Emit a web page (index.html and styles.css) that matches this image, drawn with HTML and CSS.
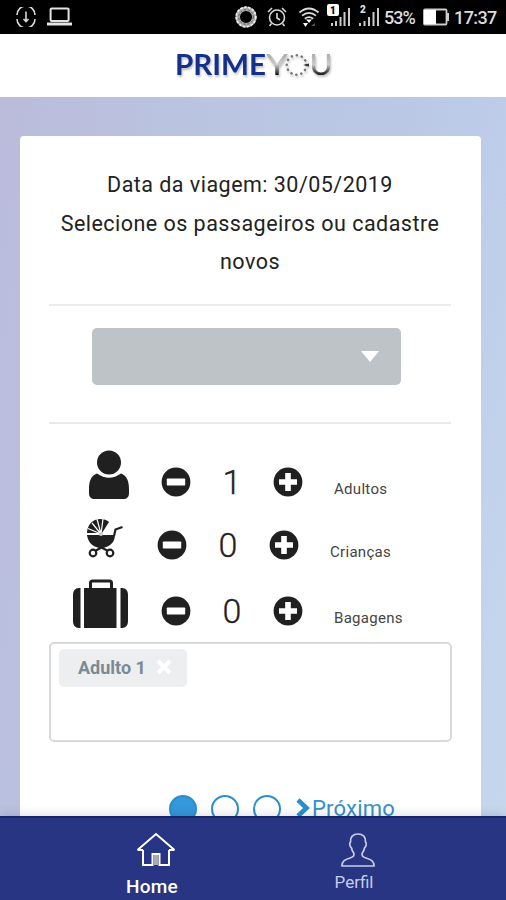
FILE: index.html
```html
<!DOCTYPE html>
<html lang="pt-BR">
<head>
<meta charset="utf-8">
<title>PrimeYou</title>
<link rel="stylesheet" href="styles.css">
</head>
<body>
<svg class="defs" width="0" height="0" aria-hidden="true">
  <symbol id="minus" viewBox="0 0 30 30"><circle cx="15" cy="15" r="14.4"/><rect x="5.8" y="11.6" width="18.4" height="6.8" rx=".7" fill="#fff"/></symbol>
  <symbol id="plus" viewBox="0 0 30 30"><circle cx="15" cy="15" r="14.4"/><path d="M12.200 6h5.600v6.200H24v5.600h-6.200V24h-5.600v-6.200H6v-5.600h6.200z" fill="#fff"/></symbol>
</svg>
<div class="screen">
  <div class="status">
    <svg class="st-sync" viewBox="0 0 20 20" width="20" height="20" fill="none" stroke="#d8d8d8" stroke-width="1.6"><path d="M1 8A9 9 0 0 1 19 8M1 12A9 9 0 0 0 19 12M10 4.500v10M7.500 12l2.500 2.500 2.500-2.500"/></svg>
    <svg class="st-laptop" viewBox="0 0 25 20" width="25" height="20"><rect x="3.6" y="1.500" width="18" height="12.500" rx="1" fill="none" stroke="#e4e4e4" stroke-width="2"/><path d="M0 15.500h25v3H0z" fill="#e4e4e4"/></svg>
    <span class="spacer"></span>
    <svg class="st-ring" viewBox="0 0 24 24" width="24" height="24" fill="none"><circle cx="12" cy="12" r="8.300" stroke="#aaa" stroke-width="4.500"/><circle cx="12" cy="12" r="9.800" stroke="#eee" stroke-width="1.8" stroke-dasharray="2.500 1.500"/><circle cx="12" cy="12" r="7.300" stroke="#555" stroke-width="1" stroke-dasharray="2 2"/></svg>
    <svg class="st-alarm" viewBox="0 0 20 20" width="20" height="20" fill="none" stroke="#d8d8d8" stroke-width="1.6"><circle cx="10" cy="10.5" r="7.5"/><path d="M10 6v5l3 2M1 5l4-4M19 5l-4-4M4.5 16.5L2.5 19M15.500 16.500l2 2.500"/></svg>
    <svg class="st-wifi" viewBox="0 0 22 22" width="22" height="22" fill="none" stroke="#ddd" stroke-width="1.7"><path d="M1.500 6.500q9.500-8 19 0M4 9.700q7-5.500 14 0M6.800 12.700q4.200-3 8.400 0"/><path d="M8 13.500h6l-3 3.500zM5 17h5l-2.500 4z" fill="#fff" stroke="none"/><path d="M13 20l4-3v3z" fill="#555" stroke="none"/></svg>
    <svg class="st-sim1" viewBox="0 0 24 24" width="24" height="24"><path d="M4 19h2v3H4zM8 17h2v5H8zM12.500 13h2v9h-2zM16.500 8h2v14h-2zM21 4h2v18h-2z" fill="#ccc"/><rect width="12" height="12" rx="2" fill="#fff"/><text x="6" y="9.500" text-anchor="middle" class="sim">1</text></svg>
    <svg class="st-sim2" viewBox="0 0 21 24" width="21" height="24"><path d="M0 19h2v3H0zM4.500 17h2v5h-2zM9 13h2v9H9zM13.500 8h2v14h-2zM18 4h2v18h-2z" fill="#ccc"/><text x="4" y="9" text-anchor="middle" class="sim light">2</text></svg>
    <span class="pct">53%</span>
    <svg class="st-batt" viewBox="0 0 26 18" width="26" height="18"><rect x="1" y="1.500" width="22.500" height="15" rx="1" fill="#000" stroke="#ccc" stroke-width="1.800"/><path d="M1 2h12v14H1z" fill="#fff"/><path d="M24 5h2v8h-2z" fill="#ccc"/></svg>
    <span class="time">17:37</span>
  </div>
  <header class="header">
    <svg class="logo" viewBox="0 0 170 50" width="170" height="50">
      <defs><linearGradient id="silver" gradientUnits="userSpaceOnUse" x1="0" y1="14" x2="0" y2="35"><stop offset="0" stop-color="#aaa"/><stop offset=".5" stop-color="#ccc"/><stop offset=".72" stop-color="#777"/><stop offset="1" stop-color="#111"/></linearGradient></defs>
      <text class="prime" x="6" y="34.500" textLength="91" lengthAdjust="spacingAndGlyphs">PRIME</text>
      <text class="you" x="97" y="34.500" textLength="22" lengthAdjust="spacingAndGlyphs" fill="url(#silver)">Y</text>
      <circle cx="127.500" cy="25" r="9.800" fill="none" stroke="#777" stroke-width="2.600" stroke-linecap="round" stroke-dasharray=".1 5.030"/>
      <path d="M134 25l6-1.500v3z" fill="#333"/>
      <text class="you" x="140.500" y="34.500" textLength="23" lengthAdjust="spacingAndGlyphs" fill="url(#silver)">U</text>
    </svg>
  </header>
  <main class="content">
    <section class="card">
      <div class="intro"><p class="date">Data da viagem: 30/05/2019</p><p>Selecione os passageiros ou cadastre novos</p></div>
      <div class="picker"><div class="select"><span class="caret"></span></div></div>
      <div class="counters">
        <div class="row adults">
          <span class="kind"><svg viewBox="0 0 42 50" width="42" height="50"><circle cx="21" cy="12.500" r="12"/><path d="M9 23.500q12 8.500 24 0c6 2 8 8 8 15.500v4c0 4-2 6-6 6H7c-4 0-6-2-6-6v-4c0-7.500 2-13.500 8-15.500z"/></svg></span>
          <svg class="btn"><use href="#minus"/></svg><span class="num">1</span><svg class="btn"><use href="#plus"/></svg><span class="label">Adultos</span>
        </div>
        <div class="row kids">
          <span class="kind"><svg viewBox="0 0 38 40" width="38" height="40"><path d="M1 15C1 7 7 1 14 1c4 0 7 1 9 3l-7 11z"/><path d="M1 17h28c0 8-7 13-14 13S2 25 1 17z"/><path d="M15 16L2 10.500M15 16L6 5M15 16L11 1M15 16L17 1M0 16h15" stroke="#fff" stroke-width="1.200"/><path d="M28 18l1.500-6.500 7-2.500M9 33L22 26M22 33L9 26" fill="none" stroke="#202020" stroke-width="2.200"/><circle cx="7" cy="35" r="3.300" fill="#fff" stroke="#202020" stroke-width="2.200"/><circle cx="24" cy="35" r="3.300" fill="#fff" stroke="#202020" stroke-width="2.200"/><circle cx="15" cy="16" r="2" fill="#ccc"/></svg></span>
          <svg class="btn"><use href="#minus"/></svg><span class="num">0</span><svg class="btn"><use href="#plus"/></svg><span class="label">Crianças</span>
        </div>
        <div class="row bags">
          <span class="kind"><svg viewBox="0 0 57 50" width="57" height="50"><path d="M8.500 9v40H7c-4 0-6-3-6-7V16c0-4 2-7 6-7zM48.500 9v40H50c4 0 6-3 6-7V16c0-4-2-7-6-7zM12 9h32.500v40H12z"/><path d="M18.500 10V4q0-2 2-2h17q2 0 2 2v6" fill="none" stroke="#202020" stroke-width="3"/></svg></span>
          <svg class="btn"><use href="#minus"/></svg><span class="num">0</span><svg class="btn"><use href="#plus"/></svg><span class="label">Bagagens</span>
        </div>
      </div>
      <div class="tags"><span class="tag"><span class="tag-name">Adulto 1</span><svg viewBox="0 0 16 16" width="16" height="16"><path d="M2 2l12 12M14 2L2 14" stroke="#fff" stroke-width="4"/></svg></span></div>
      <div class="pager">
        <span class="dot active"></span><span class="dot"></span><span class="dot"></span>
        <svg class="chevron" viewBox="0 0 14 20" width="14" height="20"><path d="M2 2l8.500 8L2 18" fill="none" stroke="#2b8fcd" stroke-width="4.600"/></svg>
        <span class="next">Próximo</span>
      </div>
    </section>
  </main>
  <nav class="nav">
    <a class="tab home"><svg viewBox="0 0 40 36" width="40" height="36" fill="none" stroke="#fff" stroke-width="2"><path d="M7 18v15h9.500V22h7v11H33V18M1.500 18H7M33 18h5.500M1.500 18L20 2l18.500 16"/><path d="M18 23h4v10h-4z" fill="#aab" stroke="none"/></svg><span>Home</span></a>
    <a class="tab profile"><svg viewBox="0 0 34 36" width="34" height="36" fill="none" stroke="#c9cce8" stroke-width="1.700"><path d="M17 2c-5 0-8 3-7.500 8-1.500 1-.5 5 1 6 .5 3 1.500 4 2.500 5.500 0 3-1 3.500-4 4.500-5 1.500-8 3-8 8h32c0-5-3-6.500-8-8-3-1-4-1.500-4-4.500 1-1.500 2-2.500 2.500-5.500 1.500-1 2.500-5 1-6C25 5 22 2 17 2z"/></svg><span>Perfil</span></a>
  </nav>
</div>
</body>
</html>
```
FILE: styles.css
```css
* { box-sizing: border-box; }
body { margin: 0; font-family: Roboto, "Liberation Sans", sans-serif; color: #222; }
p { margin: 0; }
svg { display: block; flex: none; }
.defs { position: absolute; }
.screen { width: 506px; height: 900px; display: flex; flex-direction: column; overflow: hidden; }

.status { height: 34px; flex: none; background: #000; display: flex; align-items: center; padding: 0 10px 0 16px; color: #ddd; font-size: 18px; font-weight: 500; }
.st-laptop { margin-left: 11px; }
.spacer { flex: 1; }
.st-alarm { margin-left: 9px; }
.st-wifi { margin-left: 11px; }
.st-sim1 { margin-left: 7px; margin-bottom: 2px; }
.st-sim2 { margin-left: 8px; margin-bottom: 2px; }
.sim { font-size: 10px; font-weight: 900; fill: #000; }
.light { fill: #ddd; }
.pct { width: 34px; margin-left: 4px; letter-spacing: -1px; }
.st-batt { margin-left: 5px; }
.time { width: 42px; margin-left: 5px; letter-spacing: -.6px; }

.header { height: 63px; flex: none; background: #fff; display: flex; justify-content: center; padding: 6px 0 0 2px; }
.logo { filter: drop-shadow(1px 2px 1px #bbb); }
.prime { font: 700 28px Lato, sans-serif; fill: #15308a; }
.you { font: 400 28px Lato, sans-serif; }

.content { flex: 1; min-height: 0; overflow: hidden; padding: 39px 25px 0 20px; background: linear-gradient(115deg, #bababa00 0%, #b9c5e000 50%, #c6d7ec 100%), linear-gradient(100deg, #bbbbda 0%, #b9c5e1 35%, #bccceb 100%); }
.card { height: 760px; background: #fff; border-radius: 4px; padding: 30px 30px 0 29px; }
.intro { height: 140px; border-bottom: 2px solid #ececec; text-align: center; font-size: 21.500px; line-height: 38.700px; letter-spacing: .47px; }
.picker { height: 118px; border-bottom: 2px solid #e8e9ea; padding: 22px 50px 0 43px; }
.select { height: 57px; border-radius: 5px; background: #bdc3c7; display: flex; align-items: center; justify-content: flex-end; padding-right: 22px; }
.caret { border: 9px solid transparent; border-top: 11px solid #fff; border-bottom: 0; }

.counters { padding-top: 26px; height: 218px; fill: #202020; }
.row { display: flex; align-items: center; height: 64px; }
.kids { height: 62px; padding-right: 4px; }
.bags { height: 70px; }
.kind { width: 112px; flex: none; display: flex; }
.adults .kind { padding-left: 39px; padding-bottom: 14px; }
.kids .kind { width: 108px; padding-left: 37px; padding-bottom: 14px; }
.bags .kind { padding-left: 23px; padding-bottom: 15px; }
.btn { width: 30px; height: 30px; }
.num { width: 82px; text-align: center; font-size: 34px; font-weight: 300; -webkit-text-stroke: .3px #222; }
.label { margin-left: 31px; padding-top: 14px; font-size: 15px; letter-spacing: .3px; color: #444; }

.tags { height: 100px; width: 403px; border: 2px solid #d8d9da; border-radius: 5px; padding: 5px 8px; }
.tag { display: flex; align-items: center; width: 128px; height: 38px; border-radius: 5px; background: #eceeef; padding: 0 0 2px 19px; color: #7b8a94; font-size: 18px; font-weight: 700; }
.tag-name { width: 78px; }

.pager { display: flex; margin-top: 53px; padding-left: 120px; }
.dot { width: 28px; height: 28px; margin-right: 14px; border: 2px solid #2b8fcd; border-radius: 50%; flex: none; }
.active { background: #3498db; }
.chevron { margin-top: 3px; margin-left: 1px; }
.next { font-size: 22px; line-height: 28px; letter-spacing: .2px; color: #3791c9; margin-left: 2px; }

.nav { position: relative; height: 84px; flex: none; background: #283583; border-top: 2px solid #182568; box-shadow: 0 -1px 10px rgba(0, 0, 0, .14); display: flex; justify-content: center; }
.tab { width: 202px; display: flex; flex-direction: column; align-items: center; }
.home { color: #fff; font-size: 19px; font-weight: 500; letter-spacing: .3px; padding-top: 14px; }
.home svg { margin-left: 8px; }
.home span { margin-top: 7px; }
.profile { color: #c9cce8; font-size: 17px; padding-top: 14px; }
.profile svg { margin-left: 8px; }
.profile span { margin-top: 4px; }
```
